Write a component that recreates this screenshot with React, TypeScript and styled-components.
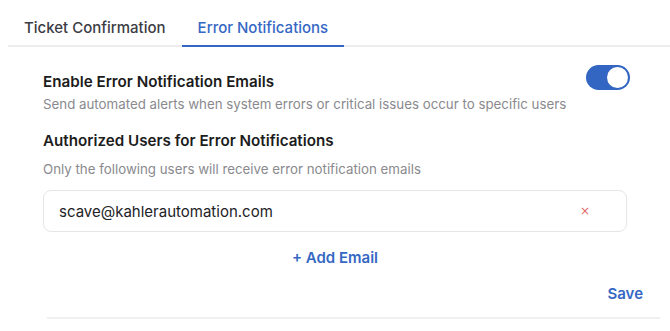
import React, { useState } from 'react';
import styled, { createGlobalStyle } from 'styled-components';

const GlobalStyle = createGlobalStyle`
  html, body {
    margin: 0;
    padding: 0;
    background: #ffffff;
  }

  body {
    font-family: Inter, 'Noto Sans', sans-serif;
    color: #1f1f1f;
  }
`;

const Page = styled.main`
  width: 670px;
  height: 331px;
  overflow: hidden;
`;

const TabBar = styled.nav`
  display: flex;
  margin-left: 8px;
  padding-top: 10px;
  border-bottom: 2px solid #ececee;
`;

const Tab = styled.button<{ $active?: boolean }>`
  font-family: inherit;
  font-size: 15px;
  line-height: 20px;
  font-weight: 500;
  padding: 8px 16px 7px;
  margin-bottom: -2px;
  background: none;
  border: none;
  border-bottom: 2px solid ${p => (p.$active ? '#3568c4' : 'transparent')};
  color: ${p => (p.$active ? '#3568c4' : '#3c3c44')};
  cursor: pointer;
`;

const Panel = styled.section`
  padding: 18px 43px 0 43px;
  display: flex;
  flex-direction: column;
`;

const SettingRow = styled.div`
  display: flex;
  justify-content: space-between;
  align-items: flex-start;
`;

const SettingText = styled.div`
  padding-top: 7px;
  display: flex;
  flex-direction: column;
  gap: 3px;
`;

const Heading = styled.h3`
  margin: 0;
  font-size: 15.2px;
  line-height: 20px;
  font-weight: 600;
  color: #1c1c1c;
`;

const Hint = styled.p`
  margin: 0;
  font-size: 13.3px;
  line-height: 18px;
  color: #8a8a8e;
`;

const Switch = styled.button<{ $on: boolean }>`
  width: 44px;
  height: 25px;
  margin-right: -3px;
  padding: 2px;
  border: none;
  border-radius: 13px;
  background: ${p => (p.$on ? '#3266c2' : '#c9c9ce')};
  display: flex;
  justify-content: ${p => (p.$on ? 'flex-end' : 'flex-start')};
  align-items: center;
  cursor: pointer;

  &::after {
    content: '';
    width: 21px;
    height: 21px;
    border-radius: 50%;
    background: #ffffff;
  }
`;

const Section = styled.div`
  margin-top: 18px;
  display: flex;
  flex-direction: column;
  gap: 9px;
`;

const EmailRow = styled.div`
  margin-top: 12px;
  height: 42px;
  box-sizing: border-box;
  border: 1px solid #e6e6e9;
  border-radius: 8px;
  display: flex;
  align-items: center;
  justify-content: space-between;
  padding: 0 36px 0 15px;
`;

const EmailText = styled.span`
  font-size: 15px;
  color: #222226;
`;

const RemoveButton = styled.button`
  border: none;
  background: none;
  padding: 0;
  font-family: 'DejaVu Sans', sans-serif;
  font-size: 12px;
  line-height: 12px;
  color: #e26a6a;
  cursor: pointer;
`;

const LinkButton = styled.button`
  border: none;
  background: none;
  padding: 0;
  font-family: inherit;
  font-size: 15px;
  line-height: 20px;
  font-weight: 600;
  color: #3568c4;
  cursor: pointer;
`;

const AddRow = styled.div`
  margin-top: 16px;
  display: flex;
  justify-content: center;
`;

const Footer = styled.footer`
  margin-top: 16px;
  padding-right: 27px;
  display: flex;
  justify-content: flex-end;
`;

const Divider = styled.hr`
  margin: 13px 10px 0 47px;
  border: none;
  border-top: 2px solid #f0f0f2;
`;

export default function App() {
  const [enabled, setEnabled] = useState(true);
  const [tab, setTab] = useState('errors');
  const emails = ['scave@kahlerautomation.com'];

  return (
    <Page>
      <GlobalStyle />
      <TabBar>
        <Tab $active={tab === 'tickets'} onClick={() => setTab('tickets')}>
          Ticket Confirmation
        </Tab>
        <Tab $active={tab === 'errors'} onClick={() => setTab('errors')}>
          Error Notifications
        </Tab>
      </TabBar>
      <Panel>
        <SettingRow>
          <SettingText>
            <Heading>Enable Error Notification Emails</Heading>
            <Hint>Send automated alerts when system errors or critical issues occur to specific users</Hint>
          </SettingText>
          <Switch $on={enabled} onClick={() => setEnabled(!enabled)} aria-label='toggle' />
        </SettingRow>
        <Section>
          <Heading>Authorized Users for Error Notifications</Heading>
          <Hint>Only the following users will receive error notification emails</Hint>
        </Section>
        {emails.map(email => (
          <EmailRow key={email}>
            <EmailText>{email}</EmailText>
            <RemoveButton aria-label='remove'>×</RemoveButton>
          </EmailRow>
        ))}
        <AddRow>
          <LinkButton>+ Add Email</LinkButton>
        </AddRow>
      </Panel>
      <Footer>
        <LinkButton>Save</LinkButton>
      </Footer>
      <Divider />
    </Page>
  );
}
